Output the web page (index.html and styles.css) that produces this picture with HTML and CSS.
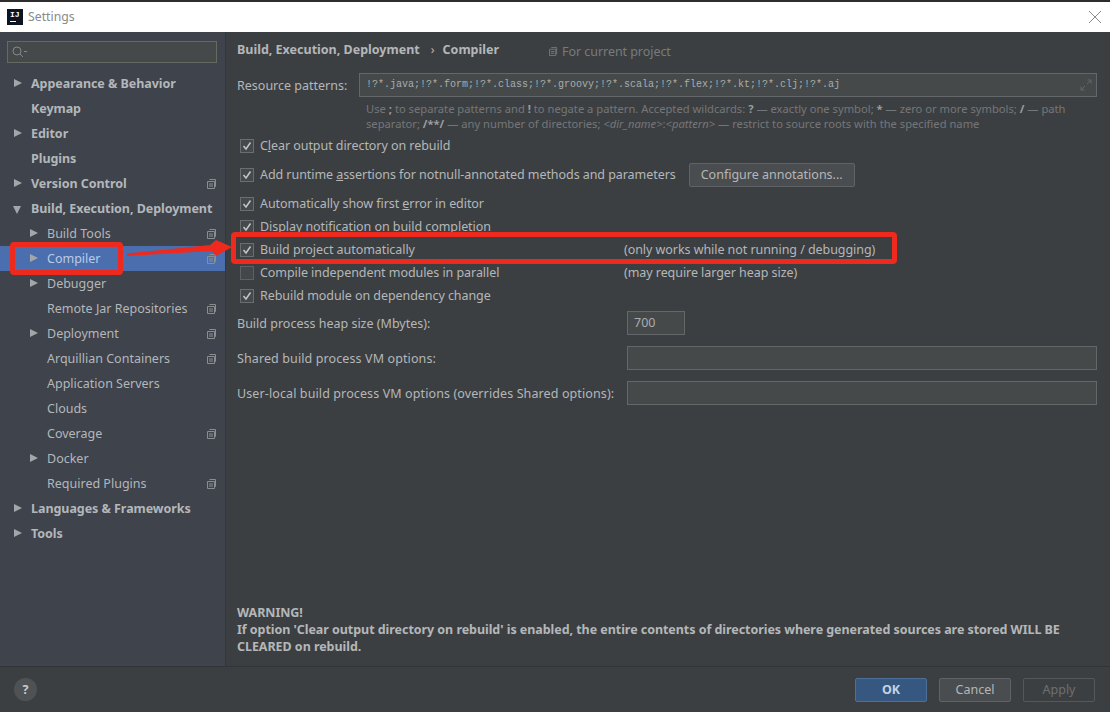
FILE: index.html
```html
<!DOCTYPE html>
<html lang="en">
<head>
    <meta charset="UTF-8">
    <meta name="viewport" content="width=device-width, initial-scale=1.0">
    <title>Settings</title>
    <link rel="stylesheet" href="styles.css">
</head>
<body>
    <svg class="defs" width="0" height="0">
        <symbol id="copy" viewBox="0 0 10 10">
            <path d="M2.5 .5H8.500V7.500H7.500M.5 2.500H7.500V9.500H.5ZM2 5H6M2 7H6" fill="none" stroke="currentColor"/>
        </symbol>
        <symbol id="check" viewBox="0 0 14 14">
            <rect x=".5" y=".5" width="13" height="13" fill="#45494b" stroke="#6b6e70"/>
            <path d="M3.500 7L6 10L10.500 3.500" fill="none" stroke="#c4c6c8" stroke-width="1.500"/>
        </symbol>
    </svg>
    <div class="window">
        <div class="titlebar">
            <div class="logo"><span>IJ</span><i></i></div>
            <span class="title">Settings</span>
            <svg class="close" width="14" height="14" viewBox="0 0 14 14"><path d="M1 1L13 13M13 1L1 13" stroke="#8c8c8c" fill="none"/></svg>
        </div>

        <div class="body">
            <div class="sidebar">
                <div class="search">
                    <svg width="18" height="12" viewBox="0 0 18 12"><circle cx="5" cy="5" r="4" fill="none" stroke="#85888a"/><path d="M8 8L11 11M12 5.500H15" stroke="#85888a" fill="none"/></svg>
                </div>
                <ul class="tree">
                    <li class="top"><b class="arrow"></b>Appearance &amp; Behavior</li>
                    <li class="top">Keymap</li>
                    <li class="top"><b class="arrow"></b>Editor</li>
                    <li class="top">Plugins</li>
                    <li class="top"><b class="arrow"></b>Version Control<svg class="copy"><use href="#copy"/></svg></li>
                    <li class="top"><b class="arrow down"></b>Build, Execution, Deployment</li>
                    <li class="sub"><b class="arrow"></b>Build Tools<svg class="copy"><use href="#copy"/></svg></li>
                    <li class="sub selected"><b class="arrow"></b>Compiler<svg class="copy"><use href="#copy"/></svg></li>
                    <li class="sub"><b class="arrow"></b>Debugger</li>
                    <li class="sub">Remote Jar Repositories<svg class="copy"><use href="#copy"/></svg></li>
                    <li class="sub"><b class="arrow"></b>Deployment<svg class="copy"><use href="#copy"/></svg></li>
                    <li class="sub">Arquillian Containers<svg class="copy"><use href="#copy"/></svg></li>
                    <li class="sub">Application Servers</li>
                    <li class="sub">Clouds</li>
                    <li class="sub">Coverage<svg class="copy"><use href="#copy"/></svg></li>
                    <li class="sub"><b class="arrow"></b>Docker</li>
                    <li class="sub">Required Plugins<svg class="copy"><use href="#copy"/></svg></li>
                    <li class="top"><b class="arrow"></b>Languages &amp; Frameworks</li>
                    <li class="top"><b class="arrow"></b>Tools</li>
                </ul>
            </div>

            <div class="content">
                <div class="crumbs">
                    <strong>Build, Execution, Deployment</strong>
                    <span class="sep">›</span>
                    <strong>Compiler</strong>
                    <span class="scope"><svg class="copy-small"><use href="#copy"/></svg>For current project</span>
                </div>

                <div class="field patterns">
                    <label>Resource patterns:</label>
                    <div class="input mono">!?*.java;!?*.form;!?*.class;!?*.groovy;!?*.scala;!?*.flex;!?*.kt;!?*.clj;!?*.aj
                        <svg class="expand" width="12" height="12" viewBox="0 0 12 12"><path d="M1 11L5 7M1 11V7.500M1 11H4.500M11 1L7 5M11 1V4.500M11 1H7.500" stroke="#62676a" fill="none"/></svg>
                    </div>
                </div>
                <p class="hint">Use <b>;</b> to separate patterns and <b>!</b> to negate a pattern. Accepted wildcards: <b>?</b> — exactly one symbol; <b>*</b> — zero or more symbols; <b>/</b> — path<br>separator; <b>/**/</b> — any number of directories; <i>&lt;dir_name&gt;</i>:<i>&lt;pattern&gt;</i> — restrict to source roots with the specified name</p>

                <div class="check first"><svg class="box"><use href="#check"/></svg><span>C<u>l</u>ear output directory on rebuild</span></div>
                <div class="check tall"><svg class="box"><use href="#check"/></svg><span>Add runtime <u>a</u>ssertions for notnull-annotated methods and parameters</span><button class="btn annotations">Configure annotations...</button></div>
                <div class="check"><svg class="box"><use href="#check"/></svg><span>Automatically show first <u>e</u>rror in editor</span></div>
                <div class="check"><svg class="box"><use href="#check"/></svg><span>Display notification on build completion</span></div>
                <div class="check"><svg class="box"><use href="#check"/></svg><span class="wide">Build project automatically</span><span>(only works while not running / debugging)</span></div>
                <div class="check"><span class="box empty"></span><span class="wide">Compile independent modules in parallel</span><span>(may require larger heap size)</span></div>
                <div class="check"><svg class="box"><use href="#check"/></svg><span>Rebuild module on dependency change</span></div>

                <div class="field heap"><label>Build process heap size (Mbytes):</label><div class="input small">700</div></div>
                <div class="field vm"><label>Shared build process VM options:</label><div class="input grow"></div></div>
                <div class="field vm"><label>User-local build process VM options (overrides Shared options):</label><div class="input grow"></div></div>

                <p class="warning">WARNING!<br>If option 'Clear output directory on rebuild' is enabled, the entire contents of directories where generated sources are stored WILL BE CLEARED on rebuild.</p>
            </div>
        </div>

        <div class="footer">
            <div class="help">?</div>
            <div class="actions">
                <button class="btn ok">OK</button>
                <button class="btn">Cancel</button>
                <button class="btn off">Apply</button>
            </div>
        </div>

        <!-- red marks drawn on top of the screenshot -->
        <div class="mark mark-tree"></div>
        <div class="mark mark-row"></div>
        <svg class="mark-arrow" width="110" height="24" viewBox="0 0 110 24"><path d="M3 15.500L86 7L92 2L108 9L92 18L88 13L3 18Z" fill="#ee2a1e"/></svg>
    </div>
</body>
</html>
```

FILE: styles.css
```css
* {
    box-sizing: border-box;
}
html, body {
    margin: 0;
    padding: 0;
}
body {
    font-family: "Noto Sans", "Open Sans", sans-serif;
    font-size: 12.5px;
    color: #b4b7b9;
    background: #3c3f41;
}
.defs {
    position: absolute;
}
.window {
    position: relative;
    width: 1110px;
    height: 712px;
    overflow: hidden;
    display: flex;
    flex-direction: column;
}

/* title bar */
.titlebar {
    height: 32px;
    flex: none;
    background: white;
    border-top: 2px solid #2d2d2d;
    display: flex;
    align-items: center;
    padding: 0 8px 0 7px;
}
.logo {
    width: 16px;
    height: 16px;
    background: #0c1422;
    color: white;
    font: bold 8px "Liberation Mono", monospace;
    padding: 2px 0 0 3px;
    line-height: 8px;
    margin-right: 5px;
}
.logo span {
    display: block;
}
.logo i {
    display: block;
    width: 6px;
    height: 1px;
    margin-top: 2px;
    background: white;
}
.title {
    color: #8a8a8a;
    font-size: 12.25px;
    margin-bottom: 2px;
}
.close {
    margin-left: auto;
}

.body {
    flex: 1;
    display: flex;
    min-height: 0;
}

/* left tree */
.sidebar {
    width: 226px;
    flex: none;
    background: #3e434c;
    border-right: 1px solid #35383a;
    padding-top: 9px;
}
.search {
    height: 22px;
    margin: 0 8px 0 7px;
    background: #45494a;
    border: 1px solid #646a5f;
    display: flex;
    align-items: center;
    padding-left: 4px;
}
.tree {
    list-style: none;
    margin: 8px 0 0;
    padding: 0;
}
.tree li {
    position: relative;
    height: 25px;
    line-height: 25px;
    white-space: nowrap;
}
.top {
    padding-left: 31px;
    font-weight: bold;
    letter-spacing: -0.05px;
    color: #b4b7b9;
}
.sub {
    padding-left: 47px;
}
.selected {
    background: #4b6eaf;
    color: #b9cce6;
}
.arrow {
    position: absolute;
    left: 14px;
    top: 8px;
    border-left: 8px solid #a4a7a9;
    border-top: 4.5px solid transparent;
    border-bottom: 4.5px solid transparent;
}
.sub .arrow {
    left: 30px;
}
.arrow.down {
    top: 10px;
    left: 13px;
    border-top: 8px solid #a4a7a9;
    border-left: 4.5px solid transparent;
    border-right: 4.5px solid transparent;
    border-bottom: none;
}
.copy {
    position: absolute;
    right: 8px;
    top: 8px;
    width: 10px;
    height: 10px;
    color: #8b8e90;
}

/* right panel */
.content {
    flex: 1;
    min-width: 0;
    padding: 0 13px 0 11px;
    display: flex;
    flex-direction: column;
}
.crumbs {
    height: 32px;
    margin-top: 1px;
    display: flex;
    align-items: center;
    color: #b4b7b9;
}
.sep {
    margin: 0 8px 0 11px;
}
.scope {
    margin-left: 50px;
    margin-top: 5px;
    letter-spacing: -0.05px;
    color: #787b7d;
    display: flex;
    align-items: center;
}
.copy-small {
    width: 9px;
    height: 9px;
    margin-right: 4px;
}
.field {
    display: flex;
    align-items: center;
    height: 24px;
}
.patterns {
    margin-top: 8px;
}
.patterns label {
    width: 122px;
}
.input {
    height: 24px;
    background: #45494a;
    border: 1px solid #646769;
    color: #a9acae;
    line-height: 22px;
    padding-left: 6px;
}
.mono {
    position: relative;
    flex: 1;
    font-family: "Liberation Mono", monospace;
    font-size: 10px;
}
.expand {
    position: absolute;
    right: 4px;
    top: 5px;
}
.hint {
    margin: 4px 0 0 129px;
    font-size: 11.2px;
    line-height: 15px;
    color: #74777a;
    white-space: nowrap;
}
.hint b {
    color: #9a9d9f;
}
.check {
    height: 23px;
    display: flex;
    align-items: center;
    padding-left: 3px;
    white-space: nowrap;
    letter-spacing: -0.06px;
}
.check.first {
    margin-top: 3px;
}
.check.tall {
    height: 35px;
}
.box {
    width: 14px;
    height: 14px;
    flex: none;
    margin-right: 6px;
}
.box.empty {
    background: #43474a;
    border: 1px solid #5e6163;
}
.wide {
    width: 364px;
}
.btn {
    font: inherit;
    height: 24px;
    padding: 0;
    width: 72px;
    background: #4a4d4f;
    border: 1px solid #5f6365;
    border-radius: 2px;
    color: #b4b7b9;
}
.annotations {
    width: 166px;
    margin-left: 13px;
}
.heap {
    margin-top: 4px;
}
.heap label, .vm label {
    width: 390px;
    white-space: nowrap;
}
.vm {
    margin-top: 11px;
}
.vm label {
    letter-spacing: 0.11px;
}
.input.small {
    width: 58px;
}
.input.grow {
    flex: 1;
}
.warning {
    margin: auto 10px 11px 0;
    font-weight: bold;
    line-height: 17px;
    letter-spacing: -0.05px;
    color: #b4b7b9;
}

/* buttons at the bottom */
.footer {
    height: 46px;
    flex: none;
    border-top: 1px solid #323537;
    display: flex;
    align-items: center;
    justify-content: space-between;
    padding: 0 15px 0 14px;
}
.help {
    width: 23px;
    height: 23px;
    border-radius: 50%;
    background: #4f5254;
    color: #c8cacc;
    font-weight: bold;
    text-align: center;
    line-height: 23px;
}
.actions {
    display: flex;
    gap: 12px;
}
.ok {
    background: #365880;
    border-color: #4c7099;
    font-weight: bold;
    color: #c3d3e6;
}
.off {
    background: none;
    border-color: #55585a;
    color: #6c6f71;
}

/* annotations */
.mark {
    position: absolute;
    border: 5px solid #ee2a1e;
    border-radius: 4px;
}
.mark-tree {
    left: 10px;
    top: 242px;
    width: 113px;
    height: 33px;
}
.mark-row {
    left: 231px;
    top: 232px;
    width: 666px;
    height: 32px;
}
.mark-arrow {
    position: absolute;
    left: 124px;
    top: 238px;
}
```
